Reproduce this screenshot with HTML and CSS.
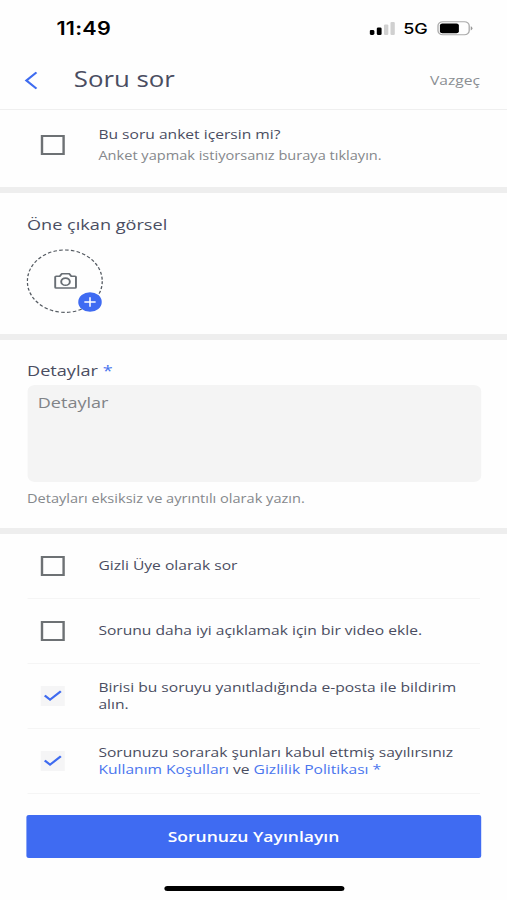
FILE: index.html
```html
<!DOCTYPE html>
<html lang="tr">
<head>
<meta charset="utf-8">
<title>Soru sor</title>
<link rel="stylesheet" href="styles.css">
</head>
<body>
<div class="screen">
  <div class="status">
    <span class="time">11:49</span>
    <svg class="signal" width="22" height="15" viewBox="0 0 22 15"><rect x="0" y="9" width="4" height="5" rx="1.4"/><rect x="6" y="6.5" width="4" height="7.5" rx="1.2"/><g fill="#d0d0d0"><rect x="12" y="3.5" width="3.6" height="10.5" rx="1"/><rect x="17.4" y="1" width="3.6" height="13" rx="1"/></g></svg>
    <span class="net">5G</span>
    <svg class="battery" width="31" height="15" viewBox="0 0 31 15"><rect x="1" y=".8" width="26" height="13" rx="4" fill="none" stroke="#aaa" stroke-width="1.1"/><rect x="2.6" y="2.6" width="15.8" height="9.6" rx="2"/><path d="M28.3 5.2v4.2q1.4-.6 1.4-2.1t-1.4-2.1" fill="#999"/></svg>
  </div>
  <header class="header">
    <svg class="back" width="12" height="19" viewBox="0 0 12 19"><path d="M10.4 1.4 2 9.5l8.4 8.1" fill="none" stroke="#3f6cf0" stroke-width="2"/></svg>
    <h1>Soru sor</h1>
    <span class="cancel">Vazgeç</span>
  </header>
  <section class="poll">
    <span class="box"></span>
    <div class="poll-text">
      <p class="label">Bu soru anket içersin mi?</p>
      <p class="hint">Anket yapmak istiyorsanız buraya tıklayın.</p>
    </div>
  </section>
  <section class="image">
    <h2>Öne çıkan görsel</h2>
    <div class="upload">
      <svg width="64" height="65" viewBox="0 0 64 65"><circle cx="32" cy="32.2" r="31.2" fill="none" stroke="#555b62" stroke-width="1.1" stroke-dasharray="3 1.9"/><g fill="none" stroke="#686e74" stroke-width="1.6" stroke-linejoin="round"><path d="M24.8 27.2h3l1.7-2.4h6.2l1.7 2.4h3.1q.8 0 .8.8v10.2q0 .8-.8.8H24.8q-.8 0-.8-.8V28q0-.8.8-.8z"/><circle cx="32.6" cy="32.7" r="3.6"/></g></svg>
      <svg class="plus" width="20" height="20" viewBox="0 0 20 20"><circle cx="10" cy="10" r="9.8" fill="#3f6bf2"/><path d="M5.3 10h9.4M10 5.3v9.4" stroke="#fff" stroke-width="1.3"/></svg>
    </div>
  </section>
  <section class="details">
    <h2>Detaylar <span class="star">*</span></h2>
    <div class="field">Detaylar</div>
    <p class="hint">Detayları eksiksiz ve ayrıntılı olarak yazın.</p>
  </section>
  <ul class="options">
    <li><span class="box"></span><p class="label">Gizli Üye olarak sor</p></li>
    <li><span class="box"></span><p class="label">Sorunu daha iyi açıklamak için bir video ekle.</p></li>
    <li><span class="box checked"><svg width="20" height="20" viewBox="0 0 20 20"><path d="m3.3 9.5 4.4 4.2 9-8.5"/></svg></span><p class="label">Birisi bu soruyu yanıtladığında e-posta ile bildirim<br>alın.</p></li>
    <li><span class="box checked"><svg width="20" height="20" viewBox="0 0 20 20"><path d="m3.3 9.5 4.4 4.2 9-8.5"/></svg></span><p class="label">Sorunuzu sorarak şunları kabul ettmiş sayılırsınız<br><a>Kullanım Koşulları</a> ve <a>Gizlilik Politikası *</a></p></li>
  </ul>
  <div class="submit">Sorunuzu Yayınlayın</div>
  <div class="home"></div>
</div>
</body>
</html>
```
FILE: styles.css
```css
* { box-sizing: border-box; }
body { margin: 0; background: #fefefe; width: 507px; height: 900px; overflow: hidden; }
h1, h2, p, ul { margin: 0; padding: 0; font-weight: 400; }
.screen {
  width: 422.5px; height: 900px; display: flex; flex-direction: column;
  transform: scaleX(1.2); transform-origin: 0 0;
  font-family: "Open Sans", "Noto Sans", sans-serif; color: #4a4d61;
}
.status { height: 56px; display: flex; align-items: center; padding: 1px 28px 0 47px; font-family: Inter, "Liberation Sans", sans-serif; color: #000; }
.time { font-size: 18px; font-weight: 600; flex: 1; letter-spacing: .2px; }
.net { font-size: 15px; font-weight: 500; margin: 0 7px 0 6px; }
.header { height: 54px; display: flex; align-items: center; padding: 0 22.5px 6px 20px; border-bottom: 1.5px solid #efefef; }
.back { margin-top: 1px; }
h1 { font-size: 21.5px; line-height: 30px; margin: -2px 0 0 29.5px; flex: 1; }
.cancel { font-size: 13px; color: #8b8e93; }
.poll { height: 83px; display: flex; padding: 14px 22.5px 0 34px; border-bottom: 6px solid #eee; }
.poll .box { margin-top: 11px; }
.poll-text { margin-left: 28px; }
.box { width: 20px; height: 20px; border: 2px solid #6d7174; flex: none; }
.checked { border: 0; background: #f5f5f6; }
.checked svg { display: block; fill: none; stroke: #3f6bf0; stroke-width: 2; }
.label { font-size: 13px; line-height: 17px; white-space: nowrap; }
.hint { font-size: 12.15px; line-height: 17px; color: #85888c; white-space: nowrap; }
.poll .label { line-height: 21px; }
.poll .hint { line-height: 21px; }
h2 { font-size: 15.1px; line-height: 20px; }
.image { height: 146.5px; padding: 21px 22.5px 0; border-bottom: 6px solid #eee; }
.upload { position: relative; width: 64px; height: 65px; margin: 15px 0 0 -1px; }
.plus { position: absolute; left: 43px; top: 42.5px; }
.details { height: 194px; padding: 20px 22px 0 22.5px; border-bottom: 6px solid #eee; }
.star { color: #4974ee; }
.field { height: 97.5px; margin-top: 5px; border-radius: 6px; background: #f4f4f4; color: #808387; padding: 7px 9px; font-size: 15px; line-height: 20px; }
.details .hint { margin-top: 7.5px; }
.options { list-style: none; margin: 0 22.5px; }
.options li { height: 65px; display: flex; align-items: center; padding-left: 11.5px; border-bottom: 1.5px solid #f5f5f5; }
.options .label { margin-left: 28px; }
a { color: #4a75ee; }
.submit { margin: 21px 22px 0; height: 43px; flex: none; background: #3f6bf2; color: #fff; border-radius: 2px; font-size: 14.6px; font-weight: 600; line-height: 42px; text-align: center; }
.home { width: 150px; height: 5px; margin: 28.5px 0 0 136.7px; background: #000; border-radius: 3px; flex: none; }
```
